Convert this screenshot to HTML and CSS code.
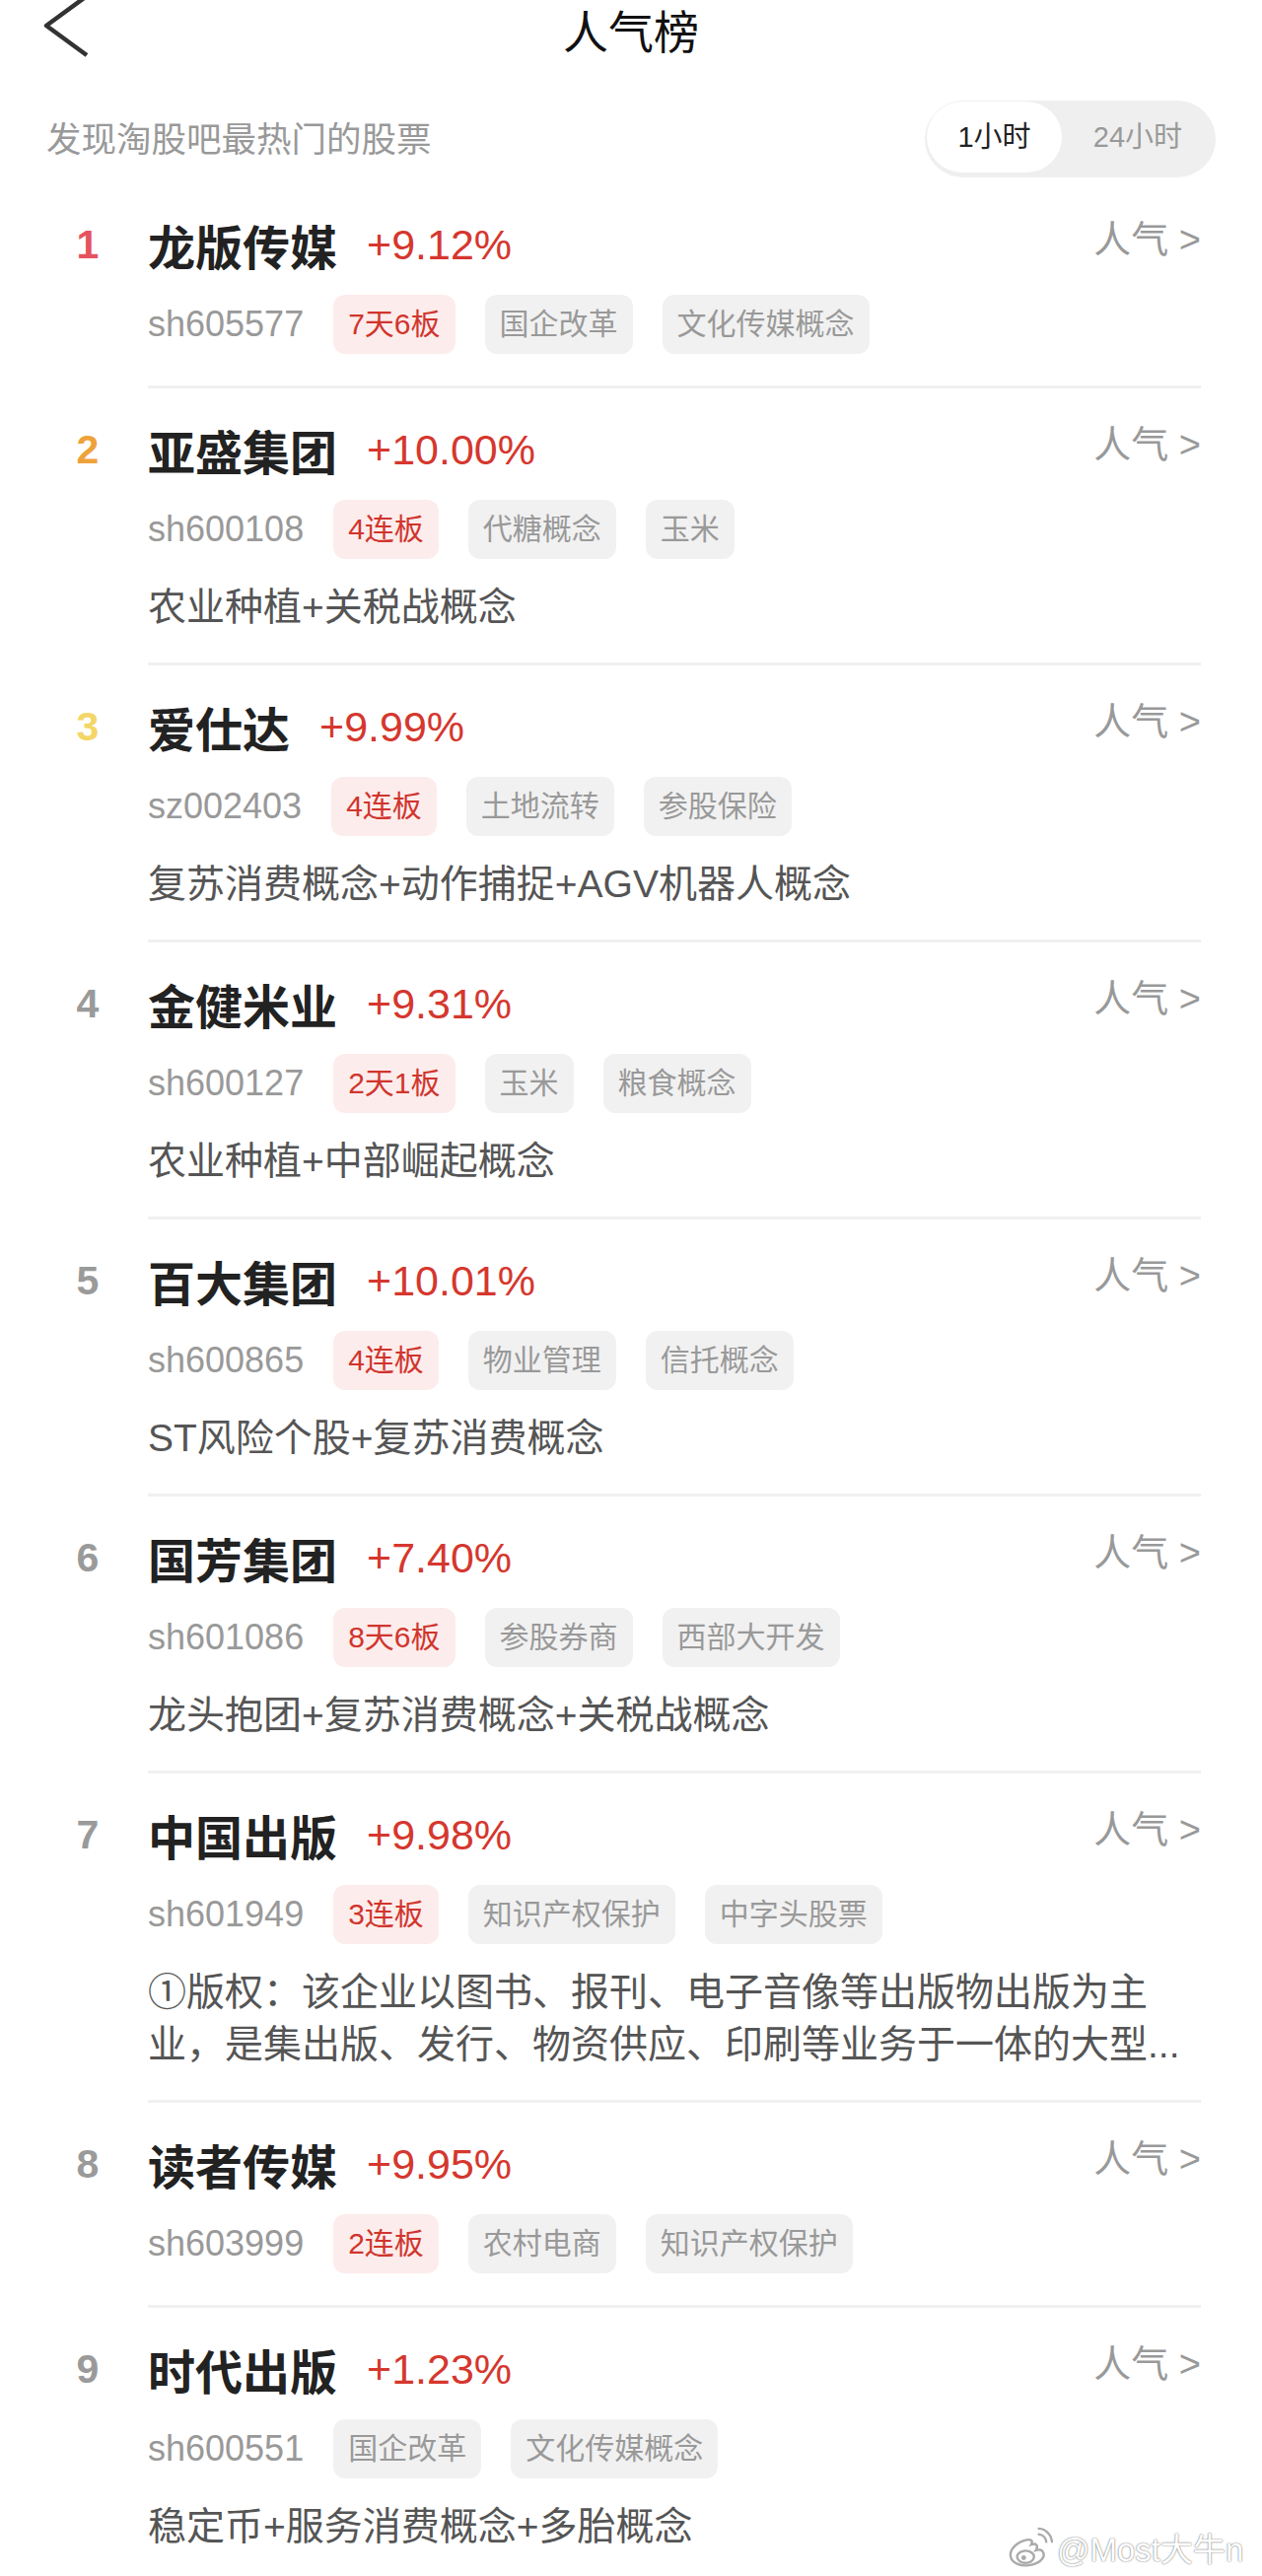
FILE: index.html
```html
<!DOCTYPE html>
<html lang="zh-CN">

<head>
    <meta charset="UTF-8">
    <title>人气榜</title>
    <link rel="stylesheet" href="styles.css">
</head>

<body>
    <div class="topbar">
        <svg class="back" width="50" height="60" viewBox="0 0 50 60">
            <polyline points="45,-4 4,26 45,56" fill="none" stroke="#333" stroke-width="4.5" stroke-linejoin="round" />
        </svg>
        <div class="title">人气榜</div>
        <div></div>
    </div>

    <div class="subbar">
        <div class="subtitle">发现淘股吧最热门的股票</div>
        <div class="seg">
            <div class="seg-item active">1小时</div>
            <div class="seg-item">24小时</div>
        </div>
    </div>

    <div class="list">
        <div class="row">
            <div class="rank r1">1</div>
            <div class="body">
                <div class="head">
                    <span class="name">龙版传媒</span>
                    <span class="pct">+9.12%</span>
                    <span class="hot">人气 &gt;</span>
                </div>
                <div class="tags">
                    <span class="code">sh605577</span>
                    <span class="tag red">7天6板</span>
                    <span class="tag">国企改革</span>
                    <span class="tag">文化传媒概念</span>
                </div>
            </div>
        </div>

        <div class="row">
            <div class="rank r2">2</div>
            <div class="body">
                <div class="head">
                    <span class="name">亚盛集团</span>
                    <span class="pct">+10.00%</span>
                    <span class="hot">人气 &gt;</span>
                </div>
                <div class="tags">
                    <span class="code">sh600108</span>
                    <span class="tag red">4连板</span>
                    <span class="tag">代糖概念</span>
                    <span class="tag">玉米</span>
                </div>
                <div class="desc">农业种植+关税战概念</div>
            </div>
        </div>

        <div class="row">
            <div class="rank r3">3</div>
            <div class="body">
                <div class="head">
                    <span class="name">爱仕达</span>
                    <span class="pct">+9.99%</span>
                    <span class="hot">人气 &gt;</span>
                </div>
                <div class="tags">
                    <span class="code">sz002403</span>
                    <span class="tag red">4连板</span>
                    <span class="tag">土地流转</span>
                    <span class="tag">参股保险</span>
                </div>
                <div class="desc">复苏消费概念+动作捕捉+AGV机器人概念</div>
            </div>
        </div>

        <div class="row">
            <div class="rank">4</div>
            <div class="body">
                <div class="head">
                    <span class="name">金健米业</span>
                    <span class="pct">+9.31%</span>
                    <span class="hot">人气 &gt;</span>
                </div>
                <div class="tags">
                    <span class="code">sh600127</span>
                    <span class="tag red">2天1板</span>
                    <span class="tag">玉米</span>
                    <span class="tag">粮食概念</span>
                </div>
                <div class="desc">农业种植+中部崛起概念</div>
            </div>
        </div>

        <div class="row">
            <div class="rank">5</div>
            <div class="body">
                <div class="head">
                    <span class="name">百大集团</span>
                    <span class="pct">+10.01%</span>
                    <span class="hot">人气 &gt;</span>
                </div>
                <div class="tags">
                    <span class="code">sh600865</span>
                    <span class="tag red">4连板</span>
                    <span class="tag">物业管理</span>
                    <span class="tag">信托概念</span>
                </div>
                <div class="desc">ST风险个股+复苏消费概念</div>
            </div>
        </div>

        <div class="row">
            <div class="rank">6</div>
            <div class="body">
                <div class="head">
                    <span class="name">国芳集团</span>
                    <span class="pct">+7.40%</span>
                    <span class="hot">人气 &gt;</span>
                </div>
                <div class="tags">
                    <span class="code">sh601086</span>
                    <span class="tag red">8天6板</span>
                    <span class="tag">参股券商</span>
                    <span class="tag">西部大开发</span>
                </div>
                <div class="desc">龙头抱团+复苏消费概念+关税战概念</div>
            </div>
        </div>

        <div class="row">
            <div class="rank">7</div>
            <div class="body">
                <div class="head">
                    <span class="name">中国出版</span>
                    <span class="pct">+9.98%</span>
                    <span class="hot">人气 &gt;</span>
                </div>
                <div class="tags">
                    <span class="code">sh601949</span>
                    <span class="tag red">3连板</span>
                    <span class="tag">知识产权保护</span>
                    <span class="tag">中字头股票</span>
                </div>
                <div class="desc long">①版权：该企业以图书、报刊、电子音像等出版物出版为主业，是集出版、发行、物资供应、印刷等业务于一体的大型...</div>
            </div>
        </div>

        <div class="row">
            <div class="rank">8</div>
            <div class="body">
                <div class="head">
                    <span class="name">读者传媒</span>
                    <span class="pct">+9.95%</span>
                    <span class="hot">人气 &gt;</span>
                </div>
                <div class="tags">
                    <span class="code">sh603999</span>
                    <span class="tag red">2连板</span>
                    <span class="tag">农村电商</span>
                    <span class="tag">知识产权保护</span>
                </div>
            </div>
        </div>

        <div class="row last">
            <div class="rank">9</div>
            <div class="body">
                <div class="head">
                    <span class="name">时代出版</span>
                    <span class="pct">+1.23%</span>
                    <span class="hot">人气 &gt;</span>
                </div>
                <div class="tags">
                    <span class="code">sh600551</span>
                    <span class="tag">国企改革</span>
                    <span class="tag">文化传媒概念</span>
                </div>
                <div class="desc">稳定币+服务消费概念+多胎概念</div>
            </div>
        </div>
    </div>

    <div class="watermark">
        <svg width="46" height="42" viewBox="0 0 48 44">
            <path d="M20 14 C10 16 2 24 3 31 C4 39 14 42 22 41 C32 40 40 34 38 28 C37 24 33 24 30 25 C33 20 30 17 25 19 C27 15 25 13 20 14 Z" fill="#fff" stroke="#aaa" stroke-width="2.5" />
            <ellipse cx="19" cy="32" rx="9" ry="6.5" fill="none" stroke="#aaa" stroke-width="2.5" />
            <circle cx="17" cy="33" r="2.6" fill="#aaa" />
            <path d="M33 8 A9 9 0 0 1 41 16" fill="none" stroke="#aaa" stroke-width="2.5" stroke-linecap="round" />
            <path d="M33 2 A15 15 0 0 1 47 16" fill="none" stroke="#aaa" stroke-width="2.5" stroke-linecap="round" />
        </svg>
        <span>@Most大牛n</span>
    </div>
</body>

</html>
```

FILE: styles.css
```css
body {
    margin: 0;
    background: #ffffff;
    font-family: "Liberation Sans", "Noto Sans CJK SC", sans-serif;
    color: #222;
    position: relative;
}

.topbar {
    display: grid;
    grid-template-columns: 1fr auto 1fr;
    height: 66px;
}

.back {
    display: block;
    margin-left: 43px;
}

.title {
    font-size: 46px;
    line-height: 66px;
    color: #111;
}

.subbar {
    display: flex;
    justify-content: space-between;
    align-items: center;
    padding: 0 47px;
    margin-top: 36px;
}

.subtitle {
    font-size: 35.5px;
    color: #999;
    margin-top: -6px;
}

.seg {
    display: flex;
    background: #efefef;
    border-radius: 39px;
    height: 78px;
    padding: 1px 2px 5px 2px;
    box-sizing: border-box;
}

.seg-item {
    font-size: 29px;
    color: #999;
    width: 154px;
    text-align: center;
    line-height: 72px;
}

.seg-item.active {
    width: 137px;
    background: #fff;
    color: #222;
    border-radius: 36px;
}

.list {
    margin-top: 6px;
    padding: 0 62px 0 47px;
}

.row {
    display: flex;
}

.rank {
    width: 84px;
    margin-right: 19px;
    text-align: center;
    font-size: 41px;
    font-weight: bold;
    line-height: 66px;
    padding-top: 29px;
    color: #9a9a9a;
}

.rank.r1 {
    color: #e5535f;
}

.rank.r2 {
    color: #eea23a;
}

.rank.r3 {
    color: #f3d667;
}

.body {
    flex: 1;
    padding: 29px 0 32px 0;
    border-bottom: 3px solid #f0f0f0;
}

.row.last .body {
    border-bottom: none;
}

.head {
    display: flex;
    align-items: center;
    height: 66px;
}

.name {
    font-size: 48px;
    font-weight: bold;
    color: #222;
}

.pct {
    font-size: 43px;
    color: #d5372e;
    margin-left: 30px;
}

.hot {
    margin-left: auto;
    align-self: flex-start;
    line-height: 56px;
    font-size: 38px;
    color: #999;
}

.tags {
    display: flex;
    align-items: center;
    gap: 30px;
    margin-top: 18px;
}

.code {
    font-size: 36px;
    color: #999;
}

.tag {
    height: 60px;
    line-height: 60px;
    padding: 0 15px;
    font-size: 30px;
    color: #999;
    background: #f1f1f1;
    border-radius: 12px;
}

.tag.red {
    color: #d0352d;
    background: #fdecec;
}

.desc {
    margin-top: 22px;
    margin-bottom: -2px;
    font-size: 39px;
    line-height: 53px;
    color: #555;
}

.desc.long {
    max-width: 1050px;
}

.watermark {
    position: absolute;
    left: 1022px;
    top: 2560px;
    display: flex;
    align-items: center;
    gap: 4px;
    font-size: 33px;
    color: #fff;
    text-shadow: 0 0 2px rgba(0, 0, 0, 0.45), 0 0 1px rgba(0, 0, 0, 0.4);
}
```
